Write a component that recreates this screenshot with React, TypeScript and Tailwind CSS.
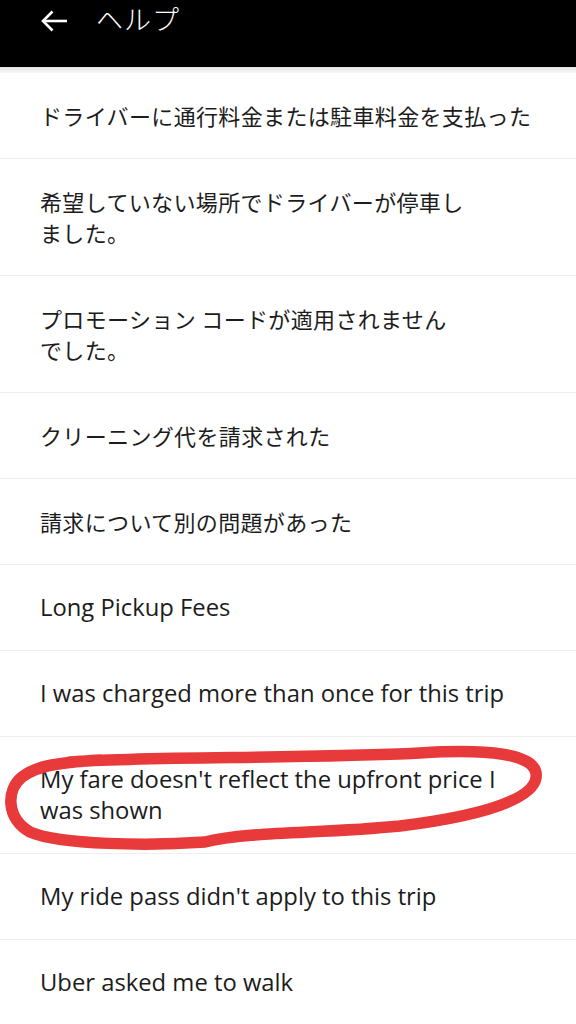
import React from "react";

const rows: { c: React.ReactNode; ja?: boolean }[] = [
  { c: "ドライバーに通行料金または駐車料金を支払った", ja: true },
  { c: <>希望していない場所でドライバーが停車し<br />ました。</>, ja: true },
  { c: <>プロモーション コードが適用されません<br />でした。</>, ja: true },
  { c: "クリーニング代を請求された", ja: true },
  { c: "請求について別の問題があった", ja: true },
  { c: "Long Pickup Fees" },
  { c: "I was charged more than once for this trip" },
  { c: <>My fare doesn't reflect the upfront price I<br />was shown</> },
  { c: "My ride pass didn't apply to this trip" },
  { c: "Uber asked me to walk" },
];

export default function App() {
  return (
    <div
      className="relative w-[576px] h-[1024px] overflow-hidden bg-white"
      style={{ fontFamily: '"Open Sans", "Noto Sans CJK JP", sans-serif' }}
    >
      <header className="h-[67px] bg-black flex items-start pt-[1px]">
        <div className="flex items-center h-[36px] pl-[40px]">
          <svg width="28" height="24" viewBox="0 0 28 24" className="mt-[4px]" fill="none" stroke="white" strokeWidth="2.6" strokeLinecap="butt">
            <path d="M27 12H3" />
            <path d="M12.5 2.5L3 12l9.5 9.5" />
          </svg>
          <span
            className="ml-[28px] text-white text-[27px] leading-[36px] tracking-[1px] font-light"
            style={{ fontFamily: '"Noto Sans CJK JP", sans-serif' }}
          >
            ヘルプ
          </span>
        </div>
      </header>
      <div className="h-[6px] bg-gradient-to-b from-[#e6e6e6] to-[#f7f7f7]" />
      <ul>
        {rows.map((r, i) => (
          <li
            key={i}
            className={
              r.ja
                ? "border-b border-[#efefef] px-[40px] py-[27px] text-[22px] leading-[31px] tracking-[0.35px] text-[#1c1c1c]"
                : "border-b border-[#efefef] px-[40px] py-[27px] text-[23.8px] leading-[31px] text-[#1c1c1c]"
            }
            style={r.ja ? { fontFamily: '"Noto Sans CJK JP", sans-serif' } : undefined}
          >
            {r.c}
          </li>
        ))}
      </ul>
      <svg
        className="absolute top-0 left-0 pointer-events-none"
        width="576"
        height="1024"
        viewBox="0 0 576 1024"
        fill="none"
      >
        <path
          d="M70 762 C 140 756, 300 759, 420 753 C 482 749, 540 752, 536 778 C 532 802, 472 817, 400 826 C 320 834, 250 831, 205 842 C 150 846, 60 845, 30 832 C 6 818, 6 790, 22 777 C 36 766, 55 763, 100 760"
          stroke="#e8393b"
          strokeWidth="11.5"
          strokeLinecap="round"
          strokeLinejoin="round"
        />
      </svg>
    </div>
  );
}
